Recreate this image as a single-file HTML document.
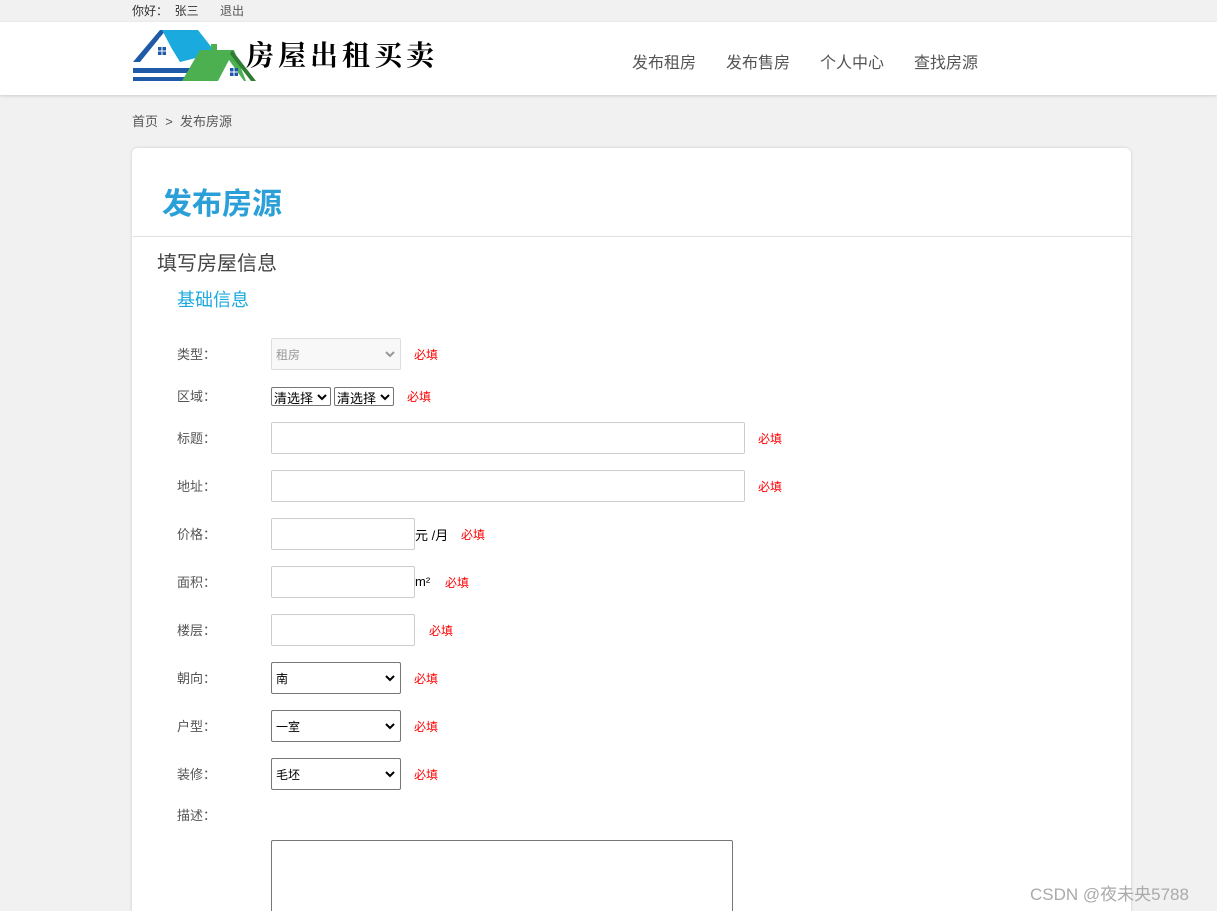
<!DOCTYPE html>
<html><head><meta charset="utf-8"><style>
*{margin:0;padding:0;box-sizing:border-box}
html,body{width:1217px;height:911px;overflow:hidden}
body{background:#f1f1f1;font-family:"Liberation Sans","Noto Sans CJK SC",sans-serif;position:relative;color:#555}
.a{position:absolute;white-space:nowrap}
.hdr{position:absolute;left:0;top:22px;width:1217px;height:73px;background:#fff;box-shadow:0 1px 3px rgba(0,0,0,.15)}
.nav{font-size:16px;color:#555;top:49px}
.card{position:absolute;left:132px;top:148px;width:999px;height:780px;background:#fff;border-radius:6px;box-shadow:0 0 3px rgba(0,0,0,.15)}
.lbl{font-size:13px;color:#555;left:177px}
.req{font-size:12px;color:#f00}
.in{position:absolute;left:271px;height:32px;border:1px solid #ccc;border-radius:2px;background:#fff}
.sel{position:absolute;left:271px;height:32px;width:130px;border:1px solid #767676;border-radius:2px;background:#fff;font-size:12px;color:#000;padding:7px 0 0 4px}
.chev{position:absolute;right:5px;top:11px}
</style></head><body>
<div class="a" style="left:132px;top:2px;font-size:12px;color:#333">你好：&nbsp;&nbsp;张三</div>
<div class="a" style="left:220px;top:2px;font-size:12px;color:#555">退出</div>
<div class="hdr"></div>
<svg class="a" style="left:132px;top:29px" width="126" height="53" viewBox="0 0 126 53">
<path d="M1 33 L28 1 L34 1 L8 33Z" fill="#1e5aa8"/>
<path d="M30 1 L66 1 L84 24 L48 33 L40 20Z" fill="#1baade"/>
<path d="M13 33 L28 8 L42 24 L44 33Z" fill="#fff"/>
<rect x="26" y="18" width="8" height="8" fill="#1e5aa8"/><rect x="29.5" y="18" width="1" height="8" fill="#fff"/><rect x="26" y="21.5" width="8" height="1" fill="#fff"/>
<path d="M1 39 L65 39 L62 44 L1 44Z M1 48 L58 48 L55 52 L1 52Z" fill="#1e5aa8"/>
<path d="M50 52 L68 21 L102 21 L114 52Z" fill="#4caf50"/>
<rect x="79" y="15" width="6" height="7" fill="#4caf50"/>
<path d="M86 52 L97 31 L112 52Z" fill="#fff"/>
<path d="M100 21 L124 52 L119 52 L98 25Z" fill="#2e7d32"/>
<rect x="98" y="39" width="8" height="8" fill="#1e5aa8"/><rect x="101.5" y="39" width="1" height="8" fill="#fff"/><rect x="98" y="42.5" width="8" height="1" fill="#fff"/>
</svg>
<div class="a" style="left:246px;top:34px;font-size:28px;color:#000;font-family:'Noto Serif CJK SC',serif;font-weight:bold;letter-spacing:4px">房屋出租买卖</div>
<div class="a nav" style="left:632px">发布租房</div>
<div class="a nav" style="left:726px">发布售房</div>
<div class="a nav" style="left:820px">个人中心</div>
<div class="a nav" style="left:914px">查找房源</div>
<div class="a" style="left:132px;top:111px;font-size:13px;color:#555">首页 &nbsp;&gt;&nbsp; 发布房源</div>
<div class="card"></div>
<div class="a" style="left:162px;top:179px;font-size:30px;font-weight:bold;color:#2a9fd8">发布房源</div>
<div class="a" style="left:133px;top:236px;width:998px;height:1px;background:#e0e0e0"></div>
<div class="a" style="left:157px;top:247px;font-size:20px;color:#444">填写房屋信息</div>
<div class="a" style="left:177px;top:286px;font-size:18px;color:#1baade">基础信息</div>

<div class="a lbl" style="top:344px">类型：</div>
<div class="sel" style="top:338px;border-color:#ddd;background:#f8f8f8;color:#999;padding-top:7px">租房<svg class="chev" width="10" height="8"><path d="M1 2 L5 6 L9 2" stroke="#999" stroke-width="2" fill="none"/></svg></div>
<div class="a req" style="left:414px;top:346px">必填</div>

<div class="a lbl" style="top:386px">区域：</div>
<div class="sel" style="top:387px;height:19px;width:60px;padding:0 0 0 2px;font-size:13px">清选择<svg class="chev" style="top:5px;right:3px" width="10" height="8"><path d="M1 2 L5 6 L9 2" stroke="#000" stroke-width="2" fill="none"/></svg></div>
<div class="sel" style="left:334px;top:387px;height:19px;width:60px;padding:0 0 0 2px;font-size:13px">清选择<svg class="chev" style="top:5px;right:3px" width="10" height="8"><path d="M1 2 L5 6 L9 2" stroke="#000" stroke-width="2" fill="none"/></svg></div>
<div class="a req" style="left:407px;top:388px">必填</div>

<div class="a lbl" style="top:428px">标题：</div>
<div class="in" style="top:422px;width:474px"></div>
<div class="a req" style="left:758px;top:430px">必填</div>

<div class="a lbl" style="top:476px">地址：</div>
<div class="in" style="top:470px;width:474px"></div>
<div class="a req" style="left:758px;top:478px">必填</div>

<div class="a lbl" style="top:524px">价格：</div>
<div class="in" style="top:518px;width:144px"></div>
<div class="a" style="left:415px;top:525px;font-size:13px;color:#000">元 /月</div>
<div class="a req" style="left:461px;top:526px">必填</div>

<div class="a lbl" style="top:572px">面积：</div>
<div class="in" style="top:566px;width:144px"></div>
<div class="a" style="left:415px;top:574px;font-size:13px;color:#000">m²</div>
<div class="a req" style="left:445px;top:574px">必填</div>

<div class="a lbl" style="top:620px">楼层：</div>
<div class="in" style="top:614px;width:144px"></div>
<div class="a req" style="left:429px;top:622px">必填</div>

<div class="a lbl" style="top:668px">朝向：</div>
<div class="sel" style="top:662px">南<svg class="chev" width="10" height="8"><path d="M1 2 L5 6 L9 2" stroke="#000" stroke-width="2" fill="none"/></svg></div>
<div class="a req" style="left:414px;top:670px">必填</div>

<div class="a lbl" style="top:716px">户型：</div>
<div class="sel" style="top:710px">一室<svg class="chev" width="10" height="8"><path d="M1 2 L5 6 L9 2" stroke="#000" stroke-width="2" fill="none"/></svg></div>
<div class="a req" style="left:414px;top:718px">必填</div>

<div class="a lbl" style="top:764px">装修：</div>
<div class="sel" style="top:758px">毛坯<svg class="chev" width="10" height="8"><path d="M1 2 L5 6 L9 2" stroke="#000" stroke-width="2" fill="none"/></svg></div>
<div class="a req" style="left:414px;top:766px">必填</div>

<div class="a lbl" style="top:805px">描述：</div>
<div class="a" style="left:271px;top:840px;width:462px;height:80px;border:1px solid #767676;border-radius:2px;background:#fff"></div>
<div class="a" style="left:1030px;top:880px;font-size:17px;color:#aaa">CSDN @夜未央5788</div>
</body></html>
